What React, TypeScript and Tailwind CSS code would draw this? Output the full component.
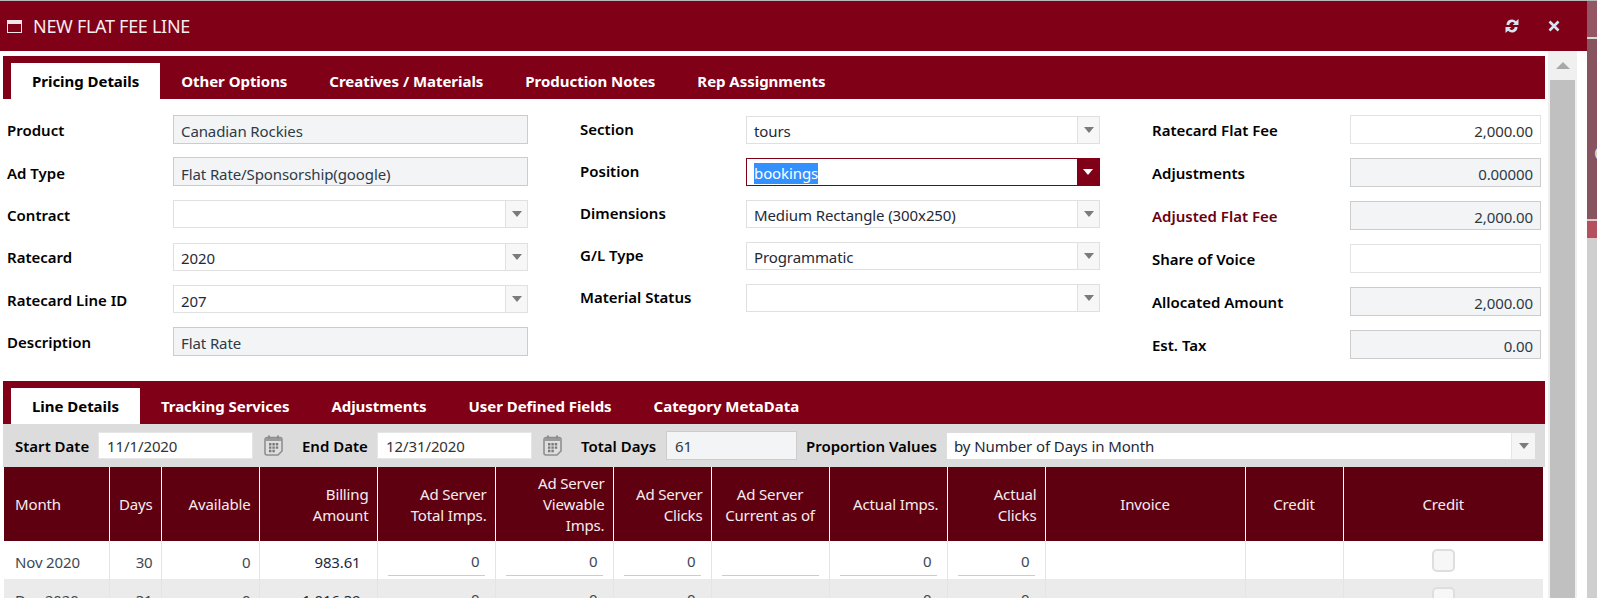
import React from 'react';

const maroon = 'bg-[#7f0017]';

function Label({ children, red }: { children: React.ReactNode; red?: boolean }) {
  return <span className={`text-[15px] font-semibold ${red ? 'text-[#6b0012]' : 'text-black'}`}>{children}</span>;
}

function Caret({ light }: { light?: boolean }) {
  return (
    <svg width="10" height="6" viewBox="0 0 10 6">
      <path d="M0 0h10L5 6z" fill={light ? '#fff' : '#7b7b7b'} />
    </svg>
  );
}

function Row({ label, children, red, low }: { label: string; children: React.ReactNode; red?: boolean; low?: boolean }) {
  return (
    <div className="flex h-[29px] items-center justify-between">
      <span className={`text-[15px] ${low ? 'pt-[2px]' : ''}`}>
        <Label red={red}>{label}</Label>
      </span>
      {children}
    </div>
  );
}

function ReadOnly({ value, right, w }: { value: string; right?: boolean; w: string }) {
  return (
    <div className={`flex h-[29px] items-center border border-[#cccccc] bg-[#f3f4f6] px-[7px] pt-[4px] text-[15px] tracking-[-0.1px] text-[#2e3a46] ${w} ${right ? 'justify-end' : ''}`}>
      {value}
    </div>
  );
}

function Plain({ value, w }: { value: string; w: string }) {
  return (
    <div className={`flex h-[29px] items-center justify-end border border-[#e3e3e3] bg-white px-[7px] pt-[4px] text-[15px] tracking-[-0.1px] text-[#333] ${w}`}>
      {value}
    </div>
  );
}

function Select({ value, w, focused }: { value?: string; w: string; focused?: boolean }) {
  return (
    <div className={`flex h-[28px] items-stretch border bg-white text-[15px] tracking-[-0.1px] text-[#1f2937] ${w} ${focused ? 'border-[#7f0017]' : 'border-[#e0e0e0]'}`}>
      <div className="flex flex-1 items-center pl-[7px] pt-[4px]">
        {focused ? <span className="bg-[#3390ff] leading-[21px] text-white">{value}</span> : value}
      </div>
      <div className={`flex w-[22px] items-center justify-center ${focused ? 'bg-[#7f0017]' : 'border-l border-[#e0e0e0] bg-[#f7f7f7]'}`}>
        <Caret light={focused} />
      </div>
    </div>
  );
}

function Tabs({ items }: { items: string[] }) {
  return (
    <div className={`flex h-[43px] items-end ${maroon} pl-2`}>
      {items.map((t, i) => (
        <div
          key={t}
          className={`flex h-[36px] items-center px-[21px] text-[15px] font-bold tracking-[-0.04px] ${i === 0 ? 'bg-white text-black' : 'text-white'}`}
        >
          {t}
        </div>
      ))}
    </div>
  );
}

function CalendarIcon() {
  return (
    <svg width="19" height="21" viewBox="0 0 19 21" className="shrink-0">
      <path d="M3 2.500h13a2 2 0 0 1 2 2V16l-4 4H3a2 2 0 0 1-2-2V4.500a2 2 0 0 1 2-2z" fill="#dedede" stroke="#8f8f8f" strokeWidth="1.600" />
      <rect x="1" y="3" width="17" height="3" fill="#9a9a9a" />
      <rect x="4" y="0.500" width="2" height="3" fill="#8c8c8c" />
      <rect x="13" y="0.500" width="2" height="3" fill="#8c8c8c" />
      <path d="M5 8h2.400v2.400H5zM8.400 8h2.400v2.400H8.400zM11.800 8h2.400v2.400h-2.400zM5 11.400h2.400v2.400H5zM8.400 11.400h2.400v2.400H8.400zM11.800 11.400h2.400v2.400h-2.400zM5 14.800h2.400v2.400H5zM8.400 14.800h2.400v2.400H8.400z" fill="#7a7a7a" />
    </svg>
  );
}

function ZeroInput({ value = '0' }: { value?: string }) {
  return <div className="ml-auto h-[26px] w-full border-b border-[#cccccc] pr-[5px] text-right leading-[23px]">{value}</div>;
}

const headers: { text: React.ReactNode; align: string }[] = [
  { text: 'Month', align: 'text-left pl-[11px]' },
  { text: 'Days', align: 'text-right' },
  { text: 'Available', align: 'text-right' },
  { text: <>Billing<br />Amount</>, align: 'text-right' },
  { text: <>Ad Server<br />Total Imps.</>, align: 'text-right' },
  { text: <>Ad Server<br />Viewable<br />Imps.</>, align: 'text-right' },
  { text: <>Ad Server<br />Clicks</>, align: 'text-right' },
  { text: <>Ad Server<br />Current as of</>, align: 'text-center' },
  { text: 'Actual Imps.', align: 'text-right' },
  { text: <>Actual<br />Clicks</>, align: 'text-right' },
  { text: 'Invoice', align: 'text-center' },
  { text: 'Credit', align: 'text-center' },
  { text: 'Credit', align: 'text-center' },
];

const rows = [
  { month: 'Nov 2020', days: '30', amount: '983.61', bg: 'bg-white' },
  { month: 'Dec 2020', days: '31', amount: '1,016.39', bg: 'bg-[#ebebeb]' },
];

const widths = ['w-[105px]', 'w-[52px]', 'w-[98px]', 'w-[118px]', 'w-[118px]', 'w-[118px]', 'w-[98px]', 'w-[118px]', 'w-[118px]', 'w-[98px]', 'w-[200px]', 'w-[98px]', 'w-[200px]'];

export default function App() {
  return (
    <div className="h-[598px] w-[1597px] overflow-hidden bg-white font-['Noto_Sans','Open_Sans',sans-serif]">
      <div className="flex h-full">
        <div className="flex w-[1587px] shrink-0 flex-col">
          {/* Title bar */}
          <div className="h-px bg-[#b9b9b9]" />
          <div className={`flex h-[50px] items-center ${maroon} pl-[7px] pr-[27px] text-white`}>
            <svg width="15" height="13" viewBox="0 0 15 13" className="mr-[11px]">
              <rect x="0.5" y="0.5" width="14" height="12" fill="none" stroke="#f3e6e8" />
              <rect x="0.5" y="0.5" width="14" height="3.5" fill="#f3e6e8" />
            </svg>
            <span className="text-[18px] tracking-[-0.3px] text-[#f7ecee]">NEW FLAT FEE LINE</span>
            <svg width="16" height="16" viewBox="0 0 16 16" className="ml-auto mr-[28px]">
              <path d="M2.500 7A5.500 5.500 0 0 1 12 3.200L14.500 1v6H8.600l2-1.800A3 3 0 0 0 5.300 7zM13.500 9A5.500 5.500 0 0 1 4 12.800L1.500 15V9h5.900l-2 1.800A3 3 0 0 0 10.700 9z" fill="#d3e6f2" />
            </svg>
            <svg width="12" height="12" viewBox="0 0 12 12">
              <path d="M1.500 1.500l9 9M10.500 1.500l-9 9" stroke="#d3e6f2" strokeWidth="2.600" />
            </svg>
          </div>

          <div className="flex min-h-0 flex-1 pl-[3px]">
            <div className="w-[1542px] shrink-0 pt-[5px]">
              <Tabs items={['Pricing Details', 'Other Options', 'Creatives / Materials', 'Production Notes', 'Rep Assignments']} />

              {/* Form */}
              <div className="flex h-[282px] pt-[16px]">
                <div className="flex w-[525px] flex-col gap-[13.4px] pl-1">
                  <Row low label="Product"><ReadOnly value="Canadian Rockies" w="w-[355px]" /></Row>
                  <Row low label="Ad Type"><ReadOnly value="Flat Rate/Sponsorship(google)" w="w-[355px]" /></Row>
                  <Row low label="Contract"><Select w="w-[355px]" /></Row>
                  <Row low label="Ratecard"><Select value="2020" w="w-[355px]" /></Row>
                  <Row low label="Ratecard Line ID"><Select value="207" w="w-[355px]" /></Row>
                  <Row low label="Description"><ReadOnly value="Flat Rate" w="w-[355px]" /></Row>
                </div>
                <div className="ml-[52px] flex w-[520px] flex-col gap-[13px]">
                  <Row label="Section"><Select value="tours" w="w-[354px]" /></Row>
                  <Row label="Position"><Select value="bookings" w="w-[354px]" focused /></Row>
                  <Row label="Dimensions"><Select value="Medium Rectangle (300x250)" w="w-[354px]" /></Row>
                  <Row label="G/L Type"><Select value="Programmatic" w="w-[354px]" /></Row>
                  <Row label="Material Status"><Select w="w-[354px]" /></Row>
                </div>
                <div className="ml-[52px] flex w-[389px] flex-col gap-[14px]">
                  <Row low label="Ratecard Flat Fee"><Plain value="2,000.00" w="w-[191px]" /></Row>
                  <Row low label="Adjustments"><ReadOnly value="0.00000" right w="w-[191px]" /></Row>
                  <Row low label="Adjusted Flat Fee" red><ReadOnly value="2,000.00" right w="w-[191px]" /></Row>
                  <Row low label="Share of Voice"><Plain value="" w="w-[191px]" /></Row>
                  <Row low label="Allocated Amount"><ReadOnly value="2,000.00" right w="w-[191px]" /></Row>
                  <Row low label="Est. Tax"><ReadOnly value="0.00" right w="w-[191px]" /></Row>
                </div>
              </div>

              <Tabs items={['Line Details', 'Tracking Services', 'Adjustments', 'User Defined Fields', 'Category MetaData']} />

              {/* Date filter */}
              <div className="flex h-[43px] items-center bg-[#dcdcdc] pl-3 pr-[10px]">
                <span className="w-[83px] shrink-0"><Label>Start Date</Label></span>
                <div className="flex h-[27px] w-[155px] items-center border border-[#e6e6e6] bg-white px-2 pt-[2px] text-[15px] tracking-[-0.1px] text-[#333]">11/1/2020</div>
                <span className="ml-[11px] mr-[19px] flex"><CalendarIcon /></span>
                <span className="w-[75px] shrink-0"><Label>End Date</Label></span>
                <div className="flex h-[27px] w-[155px] items-center border border-[#e6e6e6] bg-white px-2 pt-[2px] text-[15px] tracking-[-0.1px] text-[#333]">12/31/2020</div>
                <span className="ml-[11px] mr-[19px] flex"><CalendarIcon /></span>
                <span className="w-[85px] shrink-0"><Label>Total Days</Label></span>
                <div className="flex h-[29px] w-[131px] items-center border border-[#cccccc] bg-[#f3f4f6] px-2 pt-[2px] text-[15px] tracking-[-0.1px] text-[#2e3a46]">61</div>
                <span className="ml-[9px] w-[141px] shrink-0"><Label>Proportion Values</Label></span>
                <div className="flex h-[26px] flex-1 items-stretch bg-white text-[15px] tracking-[-0.1px] text-[#1f2937]">
                  <div className="flex flex-1 items-center pl-[7px] pt-[2px]">by Number of Days in Month</div>
                  <div className="flex w-[24px] items-center justify-center border-l border-[#e6e6e6] bg-[#f5f5f5]"><Caret /></div>
                </div>
              </div>

              {/* Grid */}
              <table className="ml-px w-[1539px] table-fixed border-collapse text-[15px] tracking-[-0.15px]">
                <colgroup>
                  {widths.map((w, i) => <col key={i} className={w} />)}
                </colgroup>
                <thead>
                  <tr className="h-[74px] bg-[#5f0011] text-[#f7ecee]">
                    {headers.map((h, i) => (
                      <th key={i} className={`border-l border-white px-[8px] pt-[1px] font-normal leading-[21px] first:border-l-0 ${h.align}`}>{h.text}</th>
                    ))}
                  </tr>
                </thead>
                <tbody>
                  {rows.map((r) => (
                    <tr key={r.month} className={`h-[38px] text-[#3d4852] ${r.bg}`}>
                      <td className="px-[11px] pt-[4px]">{r.month}</td>
                      <td className="border-l border-[#e4e4e4] px-[8px] pt-[4px] text-right">{r.days}</td>
                      <td className="border-l border-[#e4e4e4] px-[8px] pt-[4px] text-right">0</td>
                      <td className="border-l border-[#e4e4e4] pr-[16px] pt-[5px] text-right text-[#1f2937]">{r.amount}</td>
                      {[0, 1, 2, 3, 4, 5].map((c) => (
                        <td key={c} className="border-l border-[#e4e4e4] px-[10px] pt-[6px]">
                          <ZeroInput value={c === 3 ? '' : '0'} />
                        </td>
                      ))}
                      <td className="border-l border-[#e4e4e4]" />
                      <td className="border-l border-[#e4e4e4]" />
                      <td className="border-l border-[#e4e4e4]">
                        <div className="mx-auto h-[23px] w-[23px] rounded-[5px] border-2 border-[#dedede] bg-[#f7f7f7]" />
                      </td>
                    </tr>
                  ))}
                </tbody>
              </table>
            </div>

            {/* Scrollbar */}
            <div className="ml-[3px] mr-[9px] flex w-[29px] shrink-0 flex-col items-center bg-[#f0f0f0]">
              <div className="flex h-[29px] items-center justify-center">
                <svg width="14" height="7" viewBox="0 0 14 7"><path d="M0 7h14L7 0z" fill="#a8a8a8" /></svg>
              </div>
              <div className="w-[25px] flex-1 bg-[#c0c0c0]" />
            </div>
          </div>
        </div>

        {/* Backdrop behind the dialog */}
        <div className="flex min-w-0 flex-1 flex-col overflow-hidden">
          <div className="h-px bg-[#b9b9b9]" />
          <div className="h-[36px] bg-[#945564]" />
          <div className="h-[2px] bg-[#d8d8d8]" />
          <div className="h-[180px] overflow-hidden bg-[#87535e] pl-[7px] pt-[102px] text-[18px] leading-[24px] text-[#dddddd]">C</div>
          <div className="h-[2px] bg-[#e0c8cc]" />
          <div className="h-[17px] bg-[#b5505f]" />
          <div className="h-[2px] bg-[#e0c8cc]" />
          <div className="flex-1 bg-[#cfcfcf]" />
        </div>
      </div>
    </div>
  );
}
